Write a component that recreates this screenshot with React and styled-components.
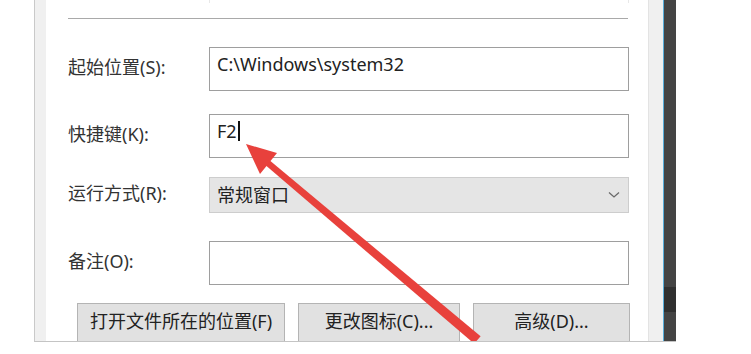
import React from "react";
import styled, { createGlobalStyle } from "styled-components";

const Global = createGlobalStyle`
  html, body { margin: 0; padding: 0; background: #ffffff; }
  body { font-family: "Noto Sans", "Noto Sans CJK SC", sans-serif; }
`;

const Stage = styled.div`
  position: relative;
  width: 751px;
  height: 354px;
  overflow: hidden;
  background: #ffffff;
`;

const Window = styled.div`
  margin-left: 34px;
  width: 642px;
  height: 342px;
  box-sizing: border-box;
  border-left: 1px solid #c9c9c9;
  border-bottom: 1px solid #c4c4c4;
  display: flex;
  overflow: hidden;
`;

const SideStrip = styled.div`
  flex: none;
  width: ${(p) => p.$w}px;
  background: #f0f0f0;
  box-sizing: border-box;
  border-left: ${(p) => (p.$edge ? "1px solid #e3e3e3" : "none")};
`;

const BlueEdge = styled.div`
  flex: none;
  width: 1px;
  background: #58aedb;
`;

const Backdrop = styled.div`
  flex: none;
  width: 12px;
  background: #444444;
  display: flex;
  flex-direction: column;
`;

const BackdropBand = styled.div`
  flex: none;
  margin-top: ${(p) => p.$top}px;
  height: ${(p) => p.$h}px;
  background: #303030;
`;

const Panel = styled.div`
  flex: none;
  width: 602px;
  box-sizing: border-box;
  padding-left: 22px;
  background: #ffffff;
  display: flex;
  flex-direction: column;
  & > * { flex-shrink: 0; }
`;

const TopStub = styled.div`
  margin-left: 141px;
  width: 420px;
  height: 3px;
  box-sizing: border-box;
  border-left: 1px solid #e8e8e8;
  border-right: 1px solid #e8e8e8;
`;

const Separator = styled.div`
  margin-top: 15px;
  width: 560px;
  height: 1px;
  background: #a9a9a9;
`;

const FieldRow = styled.div`
  margin-top: ${(p) => p.$top}px;
  display: grid;
  grid-template-columns: 141px 420px;
  align-items: center;
`;

const Label = styled.div`
  font-size: 18px;
  line-height: 24px;
  color: #333333;
  margin-top: -4px;
  white-space: nowrap;
`;

const TextBox = styled.div`
  height: 44px;
  box-sizing: border-box;
  border: 1px solid #9e9e9e;
  background: #ffffff;
  padding: 4px 7px 0;
  font-size: 18px;
  line-height: 24px;
  color: #222222;
  display: flex;
  align-items: flex-start;
  white-space: nowrap;
`;

const Caret = styled.span`
  display: inline-block;
  width: 2px;
  height: 20px;
  margin: 2px 0 0 1px;
  background: #111111;
`;

const Select = styled.div`
  height: 36px;
  box-sizing: border-box;
  border: 1px solid #cdcdcd;
  background: #e5e5e5;
  padding: 0 8px 0 7px;
  font-size: 18px;
  line-height: 24px;
  color: #222222;
  display: flex;
  align-items: center;
  justify-content: space-between;
`;

const ButtonRow = styled.div`
  margin-top: 18px;
  margin-left: 9px;
  display: flex;
  gap: 13px;
`;

const Button = styled.div`
  flex: none;
  width: ${(p) => p.$w}px;
  height: 44px;
  box-sizing: border-box;
  padding-bottom: 8px;
  border: 1px solid #b4b4b4;
  background: #e1e1e1;
  font-size: 18px;
  line-height: 24px;
  color: #222222;
  display: flex;
  align-items: center;
  justify-content: center;
  white-space: nowrap;
`;

const ArrowLayer = styled.svg`
  position: absolute;
  left: 0;
  top: 0;
  pointer-events: none;
`;

function Chevron() {
  return (
    <svg width="12" height="8" viewBox="0 0 12 8">
      <path d="M1 1.5 L6 6 L11 1.5" fill="none" stroke="#6a6a6a" strokeWidth="1.3" />
    </svg>
  );
}

export default function App() {
  return (
    <Stage>
      <Global />
      <Window>
        <SideStrip $w={11} />
        <Panel>
          <TopStub />
          <Separator />
          <FieldRow $top={28}>
            <Label>起始位置(S):</Label>
            <TextBox>C:\Windows\system32</TextBox>
          </FieldRow>
          <FieldRow $top={23}>
            <Label>快捷键(K):</Label>
            <TextBox>
              F2
              <Caret />
            </TextBox>
          </FieldRow>
          <FieldRow $top={19}>
            <Label>运行方式(R):</Label>
            <Select>
              <span>常规窗口</span>
              <Chevron />
            </Select>
          </FieldRow>
          <FieldRow $top={28}>
            <Label>备注(O):</Label>
            <TextBox />
          </FieldRow>
          <ButtonRow>
            <Button $w={208}>打开文件所在的位置(F)</Button>
            <Button $w={162}>更改图标(C)...</Button>
            <Button $w={157}>高级(D)...</Button>
          </ButtonRow>
        </Panel>
        <SideStrip $w={15} $edge />
        <BlueEdge />
        <Backdrop>
          <BackdropBand $top={287} $h={25} />
        </Backdrop>
      </Window>
      <ArrowLayer width="751" height="341" viewBox="0 0 751 341">
        <polygon points="269.5,160.3 265.3,165.1 474.2,343.7 480.6,336.3" fill="#e8413c" />
        <polygon points="246,144 277,153 260,174" fill="#e8413c" />
      </ArrowLayer>
    </Stage>
  );
}
